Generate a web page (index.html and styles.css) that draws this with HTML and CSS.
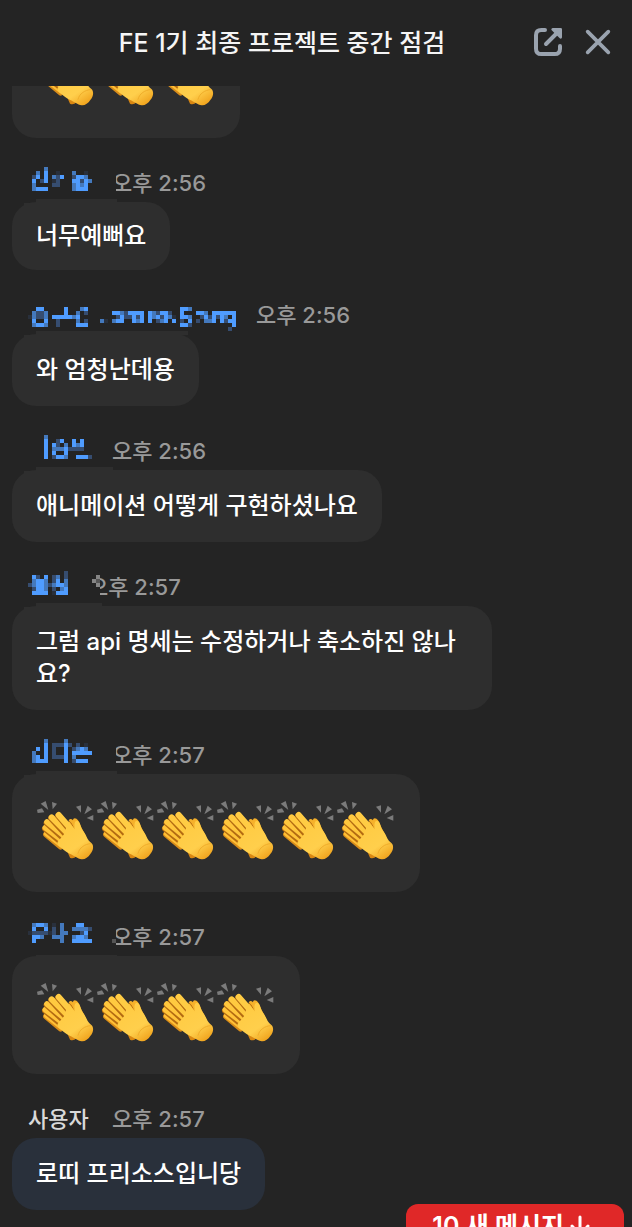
FILE: index.html
```html
<!DOCTYPE html>
<html lang="ko">
<head>
<meta charset="utf-8">
<meta name="viewport" content="width=device-width, initial-scale=1">
<title>FE 1기 최종 프로젝트 중간 점검</title>
<link rel="stylesheet" href="styles.css">
</head>
<body>
<svg class="defs" aria-hidden="true">
  <defs>
    <linearGradient id="skin" gradientUnits="userSpaceOnUse" x1="70" y1="70" x2="160" y2="200">
      <stop offset="0" stop-color="#ffc93e"/>
      <stop offset="0.7" stop-color="#ffcf4c"/>
      <stop offset="1" stop-color="#efa01a"/>
    </linearGradient>
    <symbol id="clap" viewBox="18 -3 180 234">
      <g fill="#7b7b7b">
        <path d="M21 44l15-4 7 12-20 2z"/>
        <path d="M32 26l15-8 8 27z"/>
        <path d="M66 21l15 5-13 17z"/>
        <path d="M138 35l15-4v22z"/>
        <path d="M173 32l13 11-23 15z"/>
        <path d="M170 69l20-9v17z"/>
      </g>
      <path d="M116 84c-2-12 6-16 13-8 0-9 10-8 15 0 6 8 8 20 16 32 10 15 10 32 20 39l-30 18-40-60z" fill="#f6b12b"/>
      <path d="M117 78c7 4 10 14 16 26" fill="none" stroke="#b36b12" stroke-width="3"/>
      <path d="M110 165l10 23c7 4 14 1 19-4z" fill="#d98712"/>
      <g fill="none" stroke-linecap="round">
        <path d="M49 118L92 154" stroke="#d98d1a" stroke-width="19"/>
        <path d="M50 116L95 150" stroke="#ffc036" stroke-width="16"/>
        <path d="M45 101L98 145" stroke="#b36b12" stroke-width="18"/>
        <path d="M46 98L102 140" stroke="#ffc439" stroke-width="17"/>
        <path d="M50 84L102 131" stroke="#b36b12" stroke-width="18"/>
        <path d="M51 81L108 128" stroke="#ffc73d" stroke-width="17"/>
        <path d="M64 70L111 122" stroke="#b36b12" stroke-width="19"/>
        <path d="M65 67L116 118" stroke="#ffca40" stroke-width="18"/>
        <path d="M85 62L122 107" stroke="#b36b12" stroke-width="19"/>
        <path d="M86 60L126 106" stroke="#ffcc44" stroke-width="18"/>
      </g>
      <path d="M112 86L133 105C136 99 132 93 134 84C138 72 148 78 150 87C153 99 157 104 162 112C171 125 172 136 184 144C192 150 191 166 181 177C174 187 165 194 155 193C142 191 134 182 119 176C106 170 96 160 86 152L82 142L102 118Z" fill="url(#skin)"/>
      <path d="M181 146c-15 1-33 11-37 29" fill="none" stroke="#f0ad2a" stroke-width="3" stroke-linecap="round"/>
    </symbol>
  </defs>
</svg>

<div class="chat">
  <header class="chat-header">
    <h1 class="chat-title">FE 1기 최종 프로젝트 중간 점검</h1>
    <div class="chat-actions">
      <button class="icon-button" type="button" aria-label="새 창으로 열기">
        <svg viewBox="36 33 96 96" fill="none" stroke="#9aa3af" stroke-width="12" stroke-linecap="round" stroke-linejoin="round">
          <path d="M75 45H64Q48 45 48 61V101Q48 117 64 117H104Q120 117 120 101V93M78 87L114 51"/>
          <path d="M98 43H122V67Z" fill="#9aa3af" stroke-width="8"/>
        </svg>
      </button>
      <button class="icon-button" type="button" aria-label="닫기">
        <svg viewBox="186 33 96 96" fill="none" stroke="#9aa3af" stroke-width="11" stroke-linecap="round">
          <path d="M203 50L265 112M265 50L203 112"/>
        </svg>
      </button>
    </div>
  </header>

  <main class="chat-pane">
    <ol class="messages">
      <li class="message">
        <div class="bubble claps" role="img" aria-label="박수"><svg><use href="#clap"/></svg><svg><use href="#clap"/></svg><svg><use href="#clap"/></svg></div>
      </li>
      <li class="message">
        <div class="meta"><svg class="masked" data-mask="0"></svg><time>오후 2:56</time></div>
        <p class="bubble short">너무예뻐요</p>
      </li>
      <li class="message">
        <div class="meta"><svg class="masked wide" data-mask="1"></svg><time>오후 2:56</time></div>
        <p class="bubble">와 엄청난데용</p>
      </li>
      <li class="message">
        <div class="meta"><svg class="masked" data-mask="2"></svg><time>오후 2:56</time></div>
        <p class="bubble">애니메이션 어떻게 구현하셨나요</p>
      </li>
      <li class="message">
        <div class="meta"><svg class="masked narrow" data-mask="3"></svg><time>오후 2:57</time></div>
        <p class="bubble">그럼 api 명세는 수정하거나 축소하진 않나요?</p>
      </li>
      <li class="message">
        <div class="meta"><svg class="masked" data-mask="4"></svg><time>오후 2:57</time></div>
        <div class="bubble claps" role="img" aria-label="박수"><svg><use href="#clap"/></svg><svg><use href="#clap"/></svg><svg><use href="#clap"/></svg><svg><use href="#clap"/></svg><svg><use href="#clap"/></svg><svg><use href="#clap"/></svg></div>
      </li>
      <li class="message">
        <div class="meta"><svg class="masked" data-mask="5"></svg><time>오후 2:57</time></div>
        <div class="bubble claps" role="img" aria-label="박수"><svg><use href="#clap"/></svg><svg><use href="#clap"/></svg><svg><use href="#clap"/></svg><svg><use href="#clap"/></svg></div>
      </li>
      <li class="message">
        <div class="meta"><span class="name">사용자</span><time>오후 2:57</time></div>
        <p class="bubble own">로띠 프리소스입니당</p>
      </li>
    </ol>
    <button class="new-messages" type="button">10 새 메시지
      <svg viewBox="0 0 20 24" fill="none" stroke="currentColor" stroke-width="3" stroke-linecap="round" stroke-linejoin="round"><path d="M10 3V21M2 12L10 21L18 12"/></svg>
    </button>
  </main>
</div>
<script src="masks.js"></script>
</body>
</html>
```

FILE: styles.css
```css
* {
  box-sizing: border-box;
}

body {
  margin: 0;
  background: #242424;
  color: #fff;
  font-family: Inter, "Noto Sans CJK KR", sans-serif;
  font-size: 24px;
  font-weight: 500;
  line-height: 32px;
}

button {
  border: 0;
  font: inherit;
  color: inherit;
  cursor: pointer;
}

.defs {
  position: absolute;
  width: 0;
  height: 0;
}

.chat {
  display: flex;
  flex-direction: column;
  height: 100vh;
}

.chat-header {
  display: flex;
  flex: none;
  align-items: center;
  gap: 4px;
  padding: 26px 18px 26px 36px;
}

.chat-title {
  flex: 1;
  margin: 0;
  color: #f5f5f5;
  font-size: 25px;
  font-weight: 500;
  text-align: center;
}

.chat-actions {
  display: flex;
  gap: 18px;
}

.icon-button {
  padding: 0 0 2px;
  background: none;
}

.icon-button svg {
  display: block;
  width: 32px;
  height: 32px;
}

.chat-pane {
  position: relative;
  display: flex;
  flex: 1;
  flex-direction: column;
  justify-content: flex-end;
  min-height: 0;
  overflow: hidden;
}

.messages {
  margin: 0;
  padding: 0 12px 17px;
  list-style: none;
}

.message {
  display: flex;
  flex-direction: column;
  align-items: flex-start;
}

.meta {
  display: flex;
  align-items: center;
  gap: 20px;
  padding: 32px 16px 6px;
  font-size: 22px;
  line-height: 26px;
}

.meta time {
  color: #999;
}

.name {
  min-width: 64px;
  color: #d9d9d9;
}

.masked {
  position: relative;
  z-index: 1;
  width: 64px;
  height: 26px;
  overflow: visible;
  shape-rendering: crispEdges;
}

.masked.wide {
  width: 208px;
}

.masked.narrow {
  width: 40px;
}

.bubble {
  max-width: 480px;
  margin: 0;
  padding: 20px 24px;
  border-radius: 24px;
  background: #2e2e2e;
}

.bubble.short {
  padding-block: 18px;
}

.bubble.own {
  background: #29303b;
}

.claps {
  display: flex;
}

.claps svg {
  width: 60px;
  height: 78px;
}

.new-messages {
  position: absolute;
  right: 8px;
  bottom: -21px;
  display: flex;
  align-items: center;
  gap: 6px;
  padding: 6px 34px 6px 26px;
  border-radius: 12px;
  background: #e02828;
  font-size: 25px;
  font-weight: 600;
}

.new-messages svg {
  width: 20px;
  height: 24px;
}
```

FILE: masks.js
```js
// Pixelated sender names. Each character of a row is one 4px cell.
const CELL = 4;
const COLORS = { a: "#4f9cff", b: "#4479bd", c: "#364d70", d: "#29303c", g: "#858585", h: "#555" };
const PAGE = "#242424";
const BUBBLE = "#2e2e2e";

// x, y: first cell; edge: top and right end of the smear on the bubble; cover: hidden part of the time
const masks = [
  { x: 4, y: -3, edge: [29, 89], cover: [84, 4], rows: [
    "...b...........",
    ".b.a..d...b..d.",
    "ca.a.bca..caab.",
    "a.ca.dc...aacab",
    "b....cc...baba.",
    "baaa......baaa."] },
  { x: 0, y: 5, edge: [29, 160], rows: [
    "..aa.....a...ba.......................aab...........",
    ".bccb....a..b.c......aabcaaaa.abcaac..a...aab.aaaaaa",
    "dbccb.aaaaaba.........caccaca.abacabd.aab..cacacab.a",
    ".a..a..c....b.c...bd.baa..aba.a.cba.a.c.a.c.bba.acaa",
    ".baab..c....aaa.......................aac..........a",
    "..................................................c."] },
  { x: 16, y: -3, edge: [29, 85], rows: [
    "b...........",
    "a..ca..a.a..",
    "a.ac.b.aba..",
    "a.bbbacccc..",
    "a.a..a......",
    "a.caab..aaac"] },
  { x: 0, y: -3, edge: [29, 74], cover: [60, 12], rows: [
    ".........c........",
    ".ac.a.cb.c.......g",
    ".baab.ca.b......gh",
    "cbaabcbaab.......g",
    ".caab.c.ba........",
    ".aaaa.daaa........"] },
  { x: 4, y: -3, edge: [29, 89], cover: [84, 4], rows: [
    "...b....b......",
    "...a.cccac.c.d.",
    ".a.a.c..a.cbab.",
    "b..a.c..a.aaaaa",
    "ba.a.ccca.b....",
    "baaa....a.caaa."] },
  { x: 0, y: -1, edge: [31, 89], cover: [84, 4], rows: [
    ".baab.d.b...aa.......",
    ".a..a.c.b..bbbbc.....",
    "dccccdc.bb...ca......",
    ".aab..bbb..baab......",
    ".a......b..aaaaa.....h"] }
];

function rect(svg, x, y, width, height, fill) {
  const node = document.createElementNS("http://www.w3.org/2000/svg", "rect");
  for (const [key, value] of Object.entries({ x, y, width, height, fill })) {
    node.setAttribute(key, value);
  }
  svg.append(node);
}

document.querySelectorAll("[data-mask]").forEach((svg) => {
  const mask = masks[svg.dataset.mask];
  if (mask.cover) rect(svg, mask.cover[0], 0, mask.cover[1], 24, PAGE);
  const [top, right] = mask.edge;
  rect(svg, 8, top, right - 8, CELL, BUBBLE);
  rect(svg, -4, top + CELL, right - 4, CELL, BUBBLE);
  mask.rows.forEach((row, r) => {
    [...row].forEach((key, c) => {
      if (COLORS[key]) rect(svg, mask.x + c * CELL, mask.y + r * CELL, CELL, CELL, COLORS[key]);
    });
  });
});
```
